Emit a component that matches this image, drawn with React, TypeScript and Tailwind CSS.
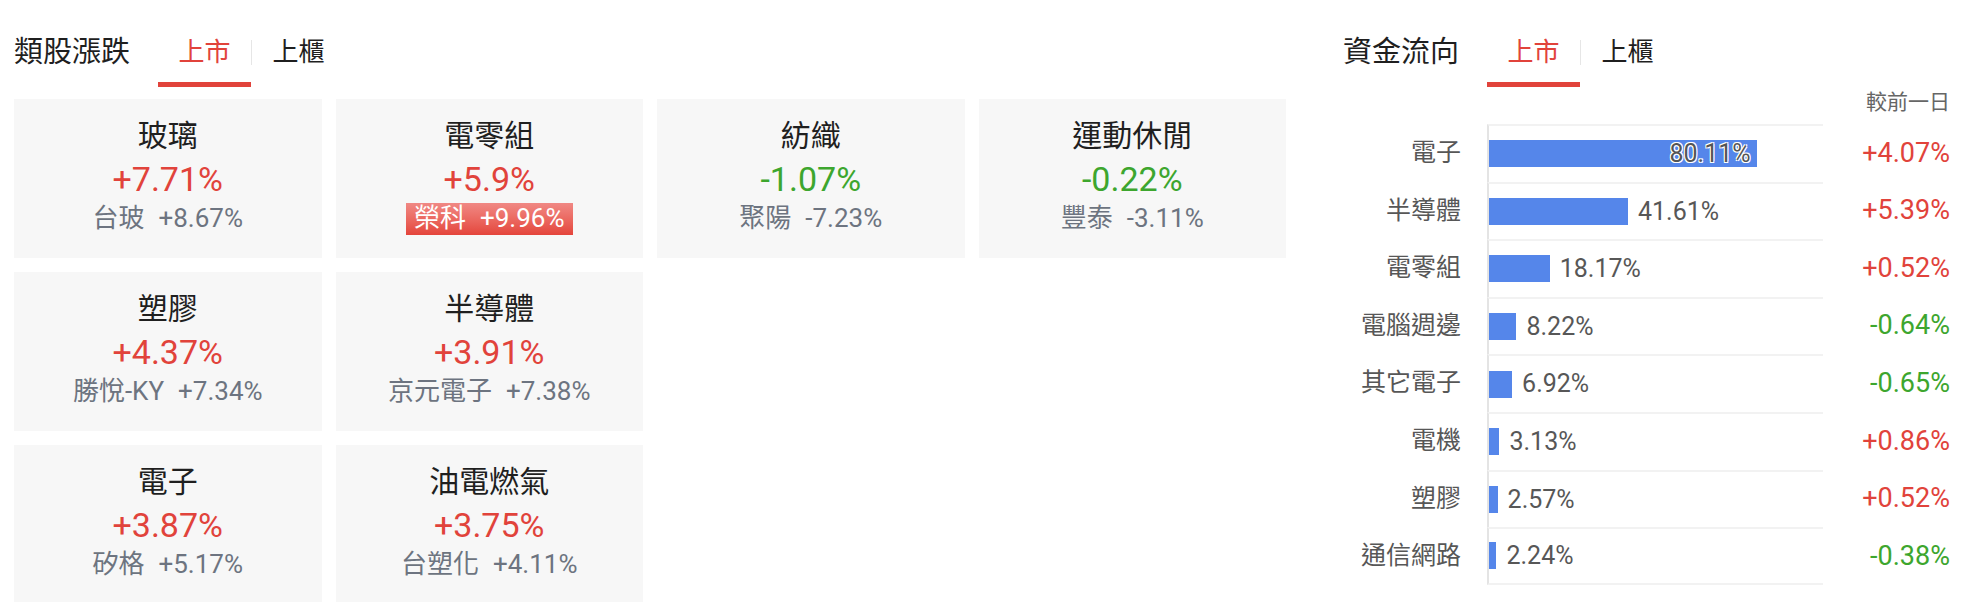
import React from "react";

interface ISectorCard {
  name: string;
  change: string;
  leader: string;
  leaderChange: string;
  limitUp?: boolean;
}

interface IFlowRow {
  name: string;
  share: number;
  change: string;
}

const sectors: ISectorCard[] = [
  { name: "玻璃", change: "+7.71%", leader: "台玻", leaderChange: "+8.67%" },
  { name: "電零組", change: "+5.9%", leader: "榮科", leaderChange: "+9.96%", limitUp: true },
  { name: "紡織", change: "-1.07%", leader: "聚陽", leaderChange: "-7.23%" },
  { name: "運動休閒", change: "-0.22%", leader: "豐泰", leaderChange: "-3.11%" },
  { name: "塑膠", change: "+4.37%", leader: "勝悅-KY", leaderChange: "+7.34%" },
  { name: "半導體", change: "+3.91%", leader: "京元電子", leaderChange: "+7.38%" },
  { name: "電子", change: "+3.87%", leader: "矽格", leaderChange: "+5.17%" },
  { name: "油電燃氣", change: "+3.75%", leader: "台塑化", leaderChange: "+4.11%" },
];

const flows: IFlowRow[] = [
  { name: "電子", share: 80.11, change: "+4.07%" },
  { name: "半導體", share: 41.61, change: "+5.39%" },
  { name: "電零組", share: 18.17, change: "+0.52%" },
  { name: "電腦週邊", share: 8.22, change: "-0.64%" },
  { name: "其它電子", share: 6.92, change: "-0.65%" },
  { name: "電機", share: 3.13, change: "+0.86%" },
  { name: "塑膠", share: 2.57, change: "+0.52%" },
  { name: "通信網路", share: 2.24, change: "-0.38%" },
];

const tone = (v: string) =>
  v.startsWith("-") ? "text-[#3da62e]" : "text-[#e1433b]";

const SectionHeader = ({ title }: { title: string }) => {
  return (
    <div className="flex h-[87px] items-start">
      <h2 className="mt-[30px] text-[29px] leading-[45px] text-[#1f1f1f]">
        {title}
      </h2>
      <div className="ml-[28px] mt-[30px] flex items-start">
        <button className="flex h-[57px] w-[93px] justify-center border-b-[5px] border-[#e1433b] text-[26px] leading-[45px] text-[#e1433b]">
          上市
        </button>
        <span className="mt-[10px] h-[25px] w-px bg-[#e6e6e6]" />
        <button className="flex h-[57px] w-[93px] justify-center border-b-[5px] border-transparent text-[26px] leading-[45px] text-[#1f1f1f]">
          上櫃
        </button>
      </div>
    </div>
  );
};

const SectorCard = ({ item, newRow }: { item: ISectorCard; newRow: boolean }) => {
  return (
    <div
      className={`flex h-[159px] flex-col items-center justify-center bg-[#f7f7f7] pb-[6px] ${
        newRow ? "col-start-1" : ""
      }`}
    >
      <div className="text-[30px] leading-[40px] text-[#1f1f1f]">{item.name}</div>
      <div className={`text-[34px] leading-[46px] ${tone(item.change)}`}>
        {item.change}
      </div>
      <div className="flex h-[34px] items-center">
        {item.limitUp ? (
          <span className="flex h-[32px] items-center gap-[14px] bg-gradient-to-b from-[#f08884] to-[#e4443b] px-[8px] text-[26px] text-white">
            <span>{item.leader}</span>
            <span>{item.leaderChange}</span>
          </span>
        ) : (
          <span className="flex items-center gap-[14px] text-[26px] text-[#6d7480]">
            <span>{item.leader}</span>
            <span>{item.leaderChange}</span>
          </span>
        )}
      </div>
    </div>
  );
};

const FlowRow = ({ row, last }: { row: IFlowRow; last: boolean }) => {
  const inside = row.share > 50;
  return (
    <div className="flex h-[57.6px]">
      <div className="flex w-[144px] items-center justify-end pr-[26px] text-[25px] text-[#575757]">
        {row.name}
      </div>
      <div
        className={`flex w-[336px] items-center border-l-2 border-t-2 border-l-[#e4e4e4] border-t-[#f2f2f2] ${
          last ? "border-b-2 border-b-[#f2f2f2]" : ""
        }`}
      >
        <div
          className="flex h-[27px] items-center justify-end bg-[#5586ea] pr-[6px]"
          style={{ width: `${row.share}%` }}
        >
          {inside && (
            <span className="text-[25px] text-[#555] [text-shadow:-1px_-1px_0_#fff,1px_-1px_0_#fff,-1px_1px_0_#fff,1px_1px_0_#fff]">
              {row.share.toFixed(2)}%
            </span>
          )}
        </div>
        {!inside && (
          <span className="ml-[10px] text-[25px] text-[#575757]">
            {row.share.toFixed(2)}%
          </span>
        )}
      </div>
      <div
        className={`flex flex-1 items-center justify-end text-[27px] ${tone(row.change)}`}
      >
        {row.change}
      </div>
    </div>
  );
};

export default function App() {
  return (
    <div className="flex min-h-[602px] bg-white pl-[14px] pr-[16px] font-[Roboto,'Noto_Sans_CJK_TC',sans-serif]">
      <section className="w-[1272px]">
        <SectionHeader title="類股漲跌" />
        {/* first row spans four columns, the rest wrap in pairs */}
        <div className="mt-[12px] grid grid-cols-4 gap-[14px]">
          {sectors.map((s, i) => (
            <SectorCard key={s.name} item={s} newRow={i >= 4 && i % 2 === 0} />
          ))}
        </div>
      </section>
      <section className="ml-[57px] w-[607px]">
        <SectionHeader title="資金流向" />
        <div className="flex h-[37px] items-center justify-end pb-[6px] text-[21px] text-[#666]">
          較前一日
        </div>
        <div>
          {flows.map((r, i) => (
            <FlowRow key={r.name} row={r} last={i === flows.length - 1} />
          ))}
        </div>
      </section>
    </div>
  );
}
